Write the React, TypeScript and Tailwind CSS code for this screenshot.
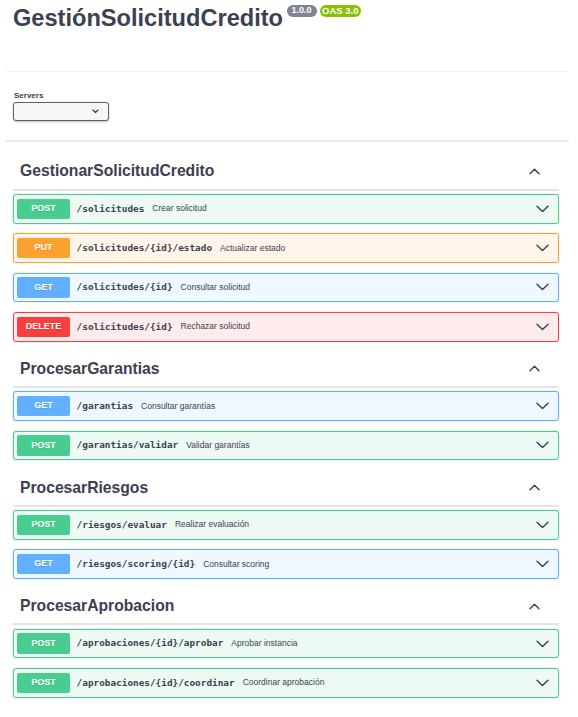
import React from "react";

type Method = "POST" | "PUT" | "GET" | "DELETE";

const styles: Record<Method, { block: string; badge: string }> = {
  POST: { block: "border-[#49cc90] bg-[#edfaf4]", badge: "bg-[#49cc90]" },
  PUT: { block: "border-[#fca130] bg-[#fff5ea]", badge: "bg-[#fca130]" },
  GET: { block: "border-[#61affe] bg-[#eff7ff]", badge: "bg-[#61affe]" },
  DELETE: { block: "border-[#f93e3e] bg-[#feebeb]", badge: "bg-[#f93e3e]" },
};

const sections: { name: string; ops: { m: Method; path: string; desc: string }[] }[] = [
  {
    name: "GestionarSolicitudCredito",
    ops: [
      { m: "POST", path: "/solicitudes", desc: "Crear solicitud" },
      { m: "PUT", path: "/solicitudes/{id}/estado", desc: "Actualizar estado" },
      { m: "GET", path: "/solicitudes/{id}", desc: "Consultar solicitud" },
      { m: "DELETE", path: "/solicitudes/{id}", desc: "Rechazar solicitud" },
    ],
  },
  {
    name: "ProcesarGarantias",
    ops: [
      { m: "GET", path: "/garantias", desc: "Consultar garantías" },
      { m: "POST", path: "/garantias/validar", desc: "Validar garantías" },
    ],
  },
  {
    name: "ProcesarRiesgos",
    ops: [
      { m: "POST", path: "/riesgos/evaluar", desc: "Realizar evaluación" },
      { m: "GET", path: "/riesgos/scoring/{id}", desc: "Consultar scoring" },
    ],
  },
  {
    name: "ProcesarAprobacion",
    ops: [
      { m: "POST", path: "/aprobaciones/{id}/aprobar", desc: "Aprobar instancia" },
      { m: "POST", path: "/aprobaciones/{id}/coordinar", desc: "Coordinar aprobación" },
    ],
  },
];

function ChevronDown() {
  return (
    <svg width="13" height="8" viewBox="0 0 13 8" fill="none">
      <path d="M1 1.2 L6.5 6.5 L12 1.2" stroke="#3b4151" strokeWidth="1.4" strokeLinecap="round" strokeLinejoin="round" />
    </svg>
  );
}

function ChevronUp() {
  return (
    <svg width="11" height="7" viewBox="0 0 11 7" fill="none">
      <path d="M1 5.8 L5.5 1.3 L10 5.8" stroke="#3b4151" strokeWidth="1.4" strokeLinecap="round" strokeLinejoin="round" />
    </svg>
  );
}

function Op({ m, path, desc }: { m: Method; path: string; desc: string }) {
  const s = styles[m];
  return (
    <div
      className={`flex items-center h-[29.5px] mb-[9.85px] border rounded-[3px] pl-[3px] pr-[9px] shadow-[0_0_2px_rgba(0,0,0,0.19)] ${s.block}`}
    >
      <div
        className={`flex items-center justify-center w-[53px] h-[20.5px] rounded-[2px] text-white font-bold text-[9px] [text-shadow:0_1px_0_rgba(0,0,0,0.1)] ${s.badge}`}
      >
        {m}
      </div>
      <span className="pl-[6.6px] pr-[8px] font-['DejaVu_Sans_Mono',monospace] font-bold text-[9.4px] text-[#3b4151] whitespace-nowrap">
        {path}
      </span>
      <span className="text-[8.5px] text-[#3b4151] whitespace-nowrap flex-1">{desc}</span>
      <ChevronDown />
    </div>
  );
}

export default function App() {
  return (
    <div className="w-[578px] min-h-[717px] bg-white font-['Liberation_Sans',Arial,sans-serif] text-[#3b4151]">
      <div className="h-[71px] pt-[5px] pl-[13px] flex items-start">
        <h1 className="text-[23.6px] font-bold leading-[27px] text-[#3b4151] m-0">GestiónSolicitudCredito</h1>
        <div className="flex items-center gap-[3px] ml-[3.5px] mt-0">
          <span className="h-[12px] flex items-center rounded-full bg-[#7d8492] text-white font-bold text-[9px] px-[5px]">
            1.0.0
          </span>
          <span className="h-[12px] flex items-center rounded-full bg-[#89bf04] text-white font-bold text-[9.5px] px-[2.5px]">
            OAS 3.0
          </span>
        </div>
      </div>

      <div className="ml-[5px] mr-[9px] pl-[8px] pt-[19px] pb-[19px] border-t border-[#f4f4f4] border-b-2 border-b-[#ececec] bg-white">
        <div className="text-[8px] font-bold leading-[9px] mb-[2px] pl-[1px]">Servers</div>
        <div className="w-[96px] h-[19px] border-[1.5px] border-[#5c5f66] rounded-[3px] bg-[#f7f7f7] shadow-[0_1px_2px_0_rgba(0,0,0,0.25)] flex items-center justify-end pr-[9px]">
          <svg width="7" height="5" viewBox="0 0 7 5" fill="none">
            <path d="M1 1 L3.5 3.5 L6 1" stroke="#3b4151" strokeWidth="1.3" strokeLinecap="round" strokeLinejoin="round" />
          </svg>
        </div>
      </div>

      <div className="pl-[13px] pr-[19px] pt-[12px]">
        {sections.map((sec) => (
          <div key={sec.name}>
            <div className="h-[36.5px] flex items-center justify-between border-b-2 border-[#e3e4e6] pl-[7px] pr-[19px] mb-[3.5px]">
              <span className="text-[15.7px] font-bold text-[#3b4151]">{sec.name}</span>
              <ChevronUp />
            </div>
            {sec.ops.map((o) => (
              <Op key={o.m + o.path} {...o} />
            ))}
          </div>
        ))}
      </div>
    </div>
  );
}
